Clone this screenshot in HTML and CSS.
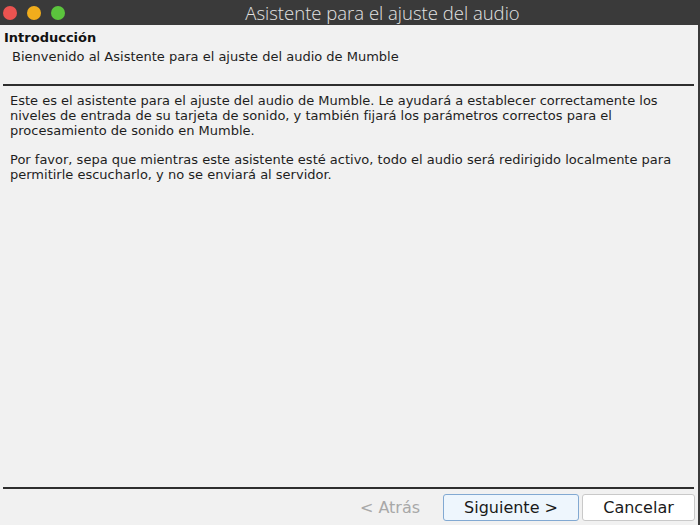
FILE: index.html
```html
<!DOCTYPE html>
<html lang="es">
<head>
<meta charset="utf-8">
<title>Asistente para el ajuste del audio</title>
<link rel="stylesheet" href="styles.css">
</head>
<body>
<div class="window">
  <header class="titlebar">
    <div class="lights">
      <span class="light red"></span>
      <span class="light yellow"></span>
      <span class="light green"></span>
    </div>
    <div class="title">Asistente para el ajuste del audio</div>
  </header>
  <main class="client">
    <section class="page-header">
      <div class="page-title">Introducción</div>
      <div class="page-subtitle">Bienvenido al Asistente para el ajuste del audio de Mumble</div>
    </section>
    <hr class="rule">
    <section class="page-body">
      <p>Este es el asistente para el ajuste del audio de Mumble. Le ayudará a establecer correctamente los niveles de entrada de su tarjeta de sonido, y también fijará los parámetros correctos para el procesamiento de sonido en Mumble.</p>
      <p>Por favor, sepa que mientras este asistente esté activo, todo el audio será redirigido localmente para permitirle escucharlo, y no se enviará al servidor.</p>
    </section>
    <hr class="rule">
    <footer class="buttons">
      <button class="btn btn-back" disabled>&lt; Atrás</button>
      <button class="btn btn-next">Siguiente &gt;</button>
      <button class="btn btn-cancel">Cancelar</button>
    </footer>
  </main>
</div>
</body>
</html>
```
FILE: styles.css
```css
html, body {
  margin: 0;
  padding: 0;
  width: 700px;
  height: 525px;
  overflow: hidden;
}
body {
  font-family: "DejaVu Sans", sans-serif;
  font-size: 13px;
  color: #1e1e1e;
}
.window {
  display: flex;
  flex-direction: column;
  width: 700px;
  height: 525px;
}
.titlebar {
  height: 25px;
  background: #3a3a3a;
  display: flex;
  align-items: center;
  flex: none;
}
.lights {
  display: flex;
  gap: 10px;
  padding-left: 3px;
  width: 62px;
  flex: none;
}
.light {
  width: 14px;
  height: 14px;
  border-radius: 50%;
  display: block;
}
.red { background: #ea5350; }
.yellow { background: #f1ad1c; }
.green { background: #5bc43d; }
.title {
  flex: 1;
  text-align: center;
  font-family: "Open Sans", sans-serif;
  font-weight: 300;
  font-size: 18.5px;
  color: #e2e2e2;
  line-height: 25px;
}
.client {
  flex: 1;
  background: #f1f1f1;
  border-right: 2px solid #3a3a3a;
  display: flex;
  flex-direction: column;
}
.page-header {
  padding: 5px 0 0 4px;
  height: 59px;
  box-sizing: border-box;
}
.page-title {
  font-weight: bold;
  line-height: 16px;
  color: #111;
}
.page-subtitle {
  padding-left: 8px;
  margin-top: 1px;
  line-height: 19px;
}
.rule {
  margin: 0 4px 0 3px;
  border: 0;
  border-top: 2px solid #2e2e2e;
  height: 0;
}
.page-body {
  flex: 1;
  padding: 7px 10px 0 10px;
}
.page-body p {
  margin: 0 0 14px 0;
  line-height: 15px;
}
.buttons {
  display: flex;
  justify-content: flex-end;
  align-items: center;
  gap: 3px;
  padding: 5px 3px 4px 0;
}
.btn {
  font-family: "DejaVu Sans", sans-serif;
  font-size: 16px;
  height: 27px;
  border-radius: 3px;
  padding: 0;
  color: #1a1a1a;
}
.btn-back {
  background: transparent;
  border: 1px solid transparent;
  color: #a8a8a8;
  width: 100px;
}
.btn-next {
  width: 136px;
  background: #eef6fd;
  border: 1px solid #82a9d2;
}
.btn-cancel {
  width: 113px;
  background: #ffffff;
  border: 1px solid #c9c9c9;
}
```
